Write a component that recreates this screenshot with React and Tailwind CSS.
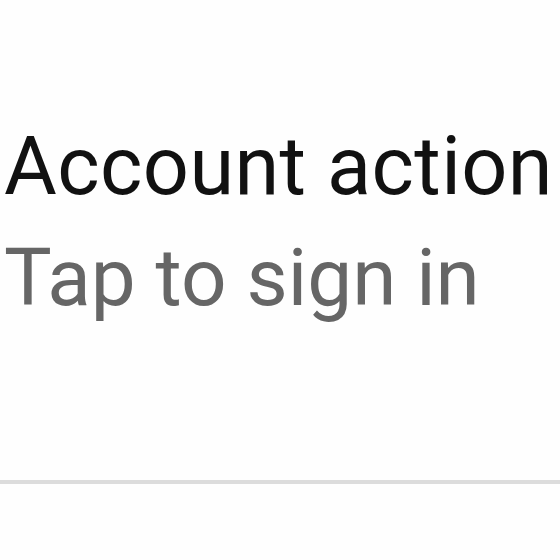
export default function App() {
  return (
    <div className="w-[560px] h-[560px] bg-[#fefefe] overflow-hidden flex flex-col" style={{ fontFamily: "Roboto, sans-serif" }}>
      <div className="h-[480px] flex flex-col pt-[120px] pl-[4px]">
        <div className="text-[81px] leading-[94px] tracking-[0.4px] text-[#111111] whitespace-nowrap">Account action</div>
        <div className="mt-[17px] text-[80px] leading-[94px] text-[#666666] whitespace-nowrap">Tap to sign in</div>
      </div>
      <div className="h-[4px] bg-[#dcdcdc]" />
    </div>
  );
}
